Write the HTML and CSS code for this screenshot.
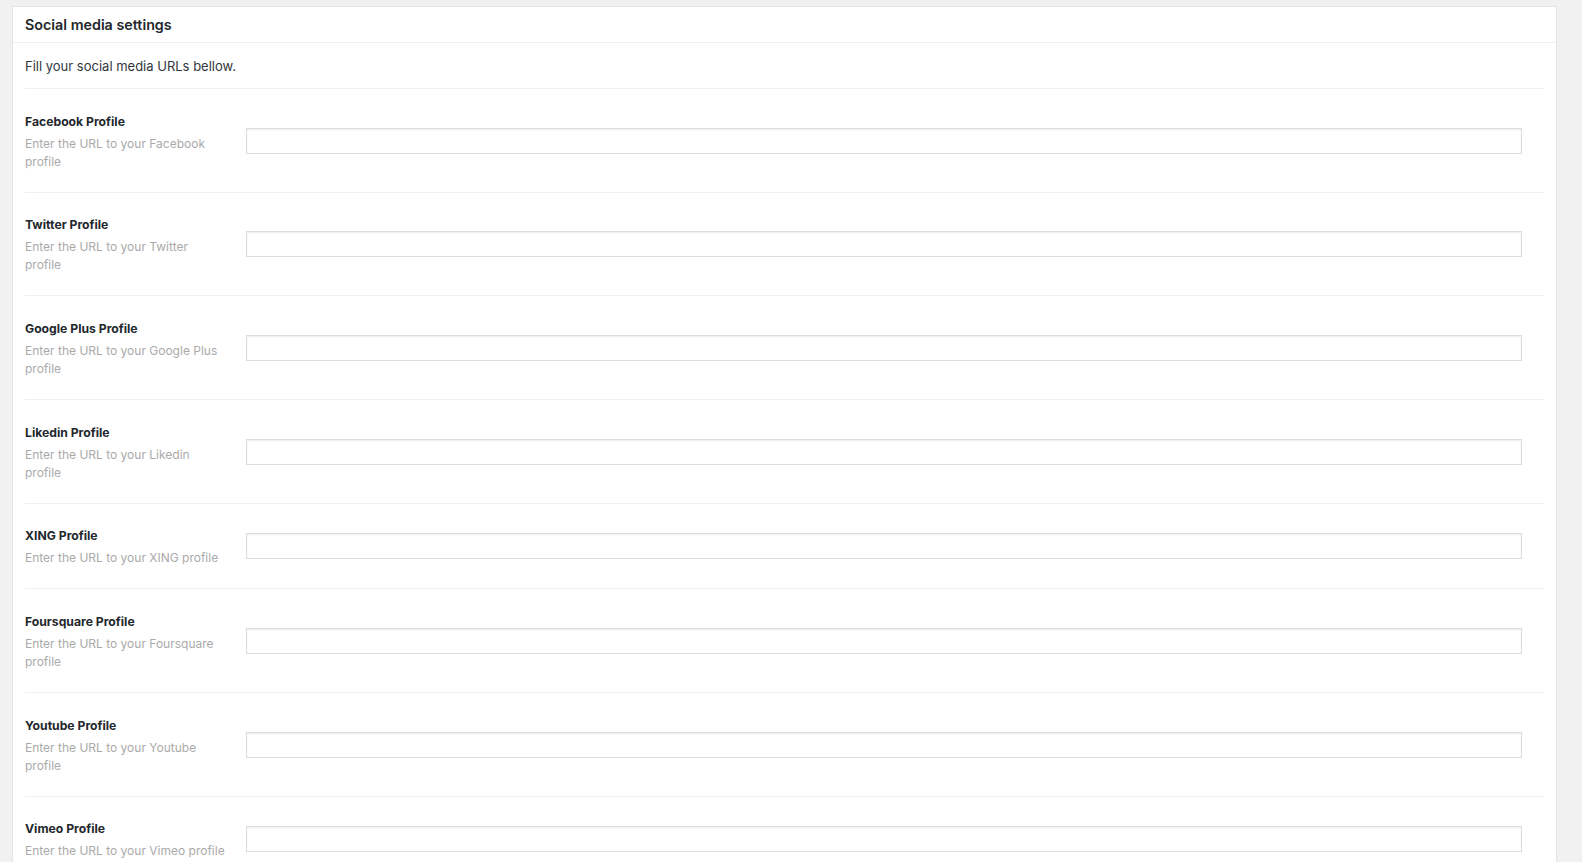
FILE: index.html
```html
<!DOCTYPE html>
<html lang="en">
<head>
<meta charset="utf-8">
<title>Social media settings</title>
<link rel="stylesheet" href="styles.css">
</head>
<body>
<div class="page">
  <section class="panel">
    <header class="panel-head">
      <h2 class="panel-title">Social media settings</h2>
    </header>
    <div class="panel-body">
      <p class="intro">Fill your social media URLs bellow.</p>

      <div class="field-row">
        <div class="field-label">
          <label class="label" for="f-facebook">Facebook Profile</label>
          <p class="desc">Enter the URL to your Facebook profile</p>
        </div>
        <input class="text-input" id="f-facebook" type="text">
      </div>

      <div class="field-row">
        <div class="field-label">
          <label class="label" for="f-twitter">Twitter Profile</label>
          <p class="desc">Enter the URL to your Twitter profile</p>
        </div>
        <input class="text-input" id="f-twitter" type="text">
      </div>

      <div class="field-row">
        <div class="field-label">
          <label class="label" for="f-google">Google Plus Profile</label>
          <p class="desc">Enter the URL to your Google Plus profile</p>
        </div>
        <input class="text-input" id="f-google" type="text">
      </div>

      <div class="field-row">
        <div class="field-label">
          <label class="label" for="f-linkedin">Likedin Profile</label>
          <p class="desc">Enter the URL to your Likedin profile</p>
        </div>
        <input class="text-input" id="f-linkedin" type="text">
      </div>

      <div class="field-row">
        <div class="field-label">
          <label class="label" for="f-xing">XING Profile</label>
          <p class="desc">Enter the URL to your XING profile</p>
        </div>
        <input class="text-input" id="f-xing" type="text">
      </div>

      <div class="field-row">
        <div class="field-label">
          <label class="label" for="f-foursquare">Foursquare Profile</label>
          <p class="desc">Enter the URL to your Foursquare profile</p>
        </div>
        <input class="text-input" id="f-foursquare" type="text">
      </div>

      <div class="field-row">
        <div class="field-label">
          <label class="label" for="f-youtube">Youtube Profile</label>
          <p class="desc">Enter the URL to your Youtube profile</p>
        </div>
        <input class="text-input" id="f-youtube" type="text">
      </div>

      <div class="field-row">
        <div class="field-label">
          <label class="label" for="f-vimeo">Vimeo Profile</label>
          <p class="desc">Enter the URL to your Vimeo profile</p>
        </div>
        <input class="text-input" id="f-vimeo" type="text">
      </div>
    </div>
  </section>
</div>
</body>
</html>
```

FILE: styles.css
```css
html, body {
  margin: 0;
  padding: 0;
  background: #f1f1f1;
}

body {
  font-family: Inter, "Liberation Sans", Arial, sans-serif;
  color: #23282d;
}

.page {
  padding: 6px 25px 0 12px;
}

.panel {
  background: #fff;
  border: 1px solid #e5e5e5;
  box-shadow: 0 1px 1px rgba(0, 0, 0, 0.04);
}

.panel-head {
  height: 35px;
  display: flex;
  align-items: center;
  padding: 0 12px;
  border-bottom: 1px solid #eeeeee;
}

.panel-title {
  margin: 0;
  font-size: 14.3px;
  font-weight: 600;
  color: #23282d;
}

.panel-body {
  padding: 0 12px;
}

.intro {
  margin: 0;
  padding: 14px 0 12px;
  font-size: 13px;
  line-height: 19px;
  color: #32373c;
}

.field-row {
  display: flex;
  align-items: center;
  border-top: 1px solid #f0f0f0;
  padding: 19.5px 0 21.2px;
}

.field-label {
  width: 221px;
  flex: none;
  padding-right: 21px;
  box-sizing: border-box;
}

.label {
  display: block;
  font-size: 12.2px;
  font-weight: 700;
  line-height: 26px;
  color: #23282d;
}

.desc {
  margin: 0;
  font-size: 12px;
  line-height: 18px;
  color: #aaaaaa;
}

.text-input {
  flex: 1;
  min-width: 0;
  height: 26px;
  margin: 2px 22px 0 0;
  padding: 3px 5px;
  box-sizing: border-box;
  border: 1px solid #dddddd;
  border-radius: 0;
  background: #fff;
  box-shadow: inset 0 1px 2px rgba(0, 0, 0, 0.07);
  font: inherit;
  font-size: 13px;
  outline: none;
}
```
